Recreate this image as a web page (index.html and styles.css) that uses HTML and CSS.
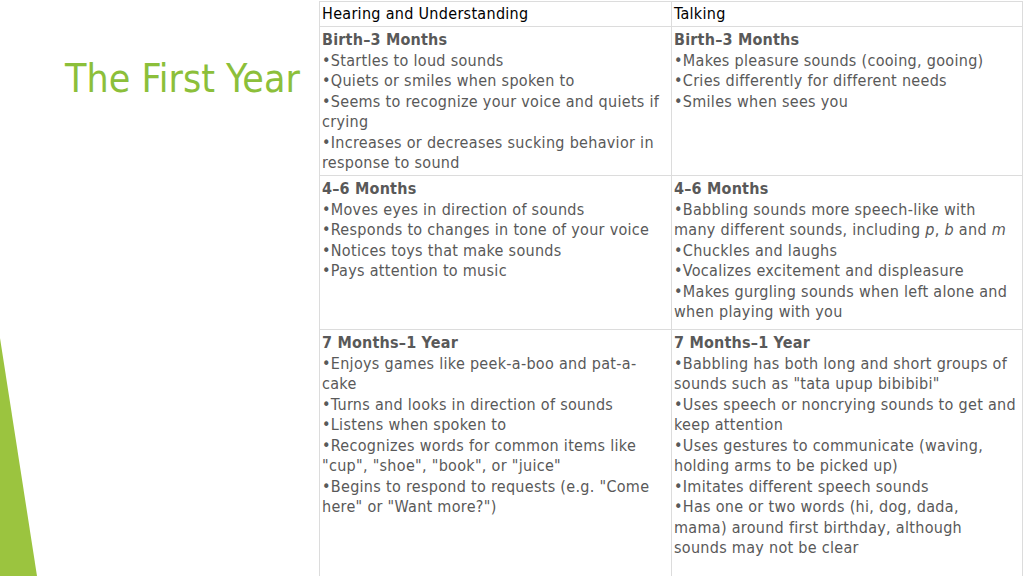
FILE: index.html
```html
<!DOCTYPE html>
<html>
<head>
<meta charset="utf-8">
<link rel="stylesheet" href="styles.css">
</head>
<body>
<div class="slide">
  <svg class="accent" width="40" height="240" viewBox="0 0 40 240"><polygon points="0,0 37,238 0,238" fill="#9bc43f"/></svg>
  <div class="side">
    <h1 class="title">The First Year</h1>
  </div>
  <div class="table">
    <div class="cell head">Hearing and Understanding</div>
    <div class="cell head">Talking</div>

    <div class="cell r1"><b>Birth–3 Months</b><br>•Startles to loud sounds<br>•Quiets or smiles when spoken to<br>•Seems to recognize your voice and quiets if<br>crying<br>•Increases or decreases sucking behavior in<br>response to sound</div>
    <div class="cell r1"><b>Birth–3 Months</b><br>•Makes pleasure sounds (cooing, gooing)<br>•Cries differently for different needs<br>•Smiles when sees you</div>

    <div class="cell r2"><b>4–6 Months</b><br>•Moves eyes in direction of sounds<br>•Responds to changes in tone of your voice<br>•Notices toys that make sounds<br>•Pays attention to music</div>
    <div class="cell r2"><b>4–6 Months</b><br>•Babbling sounds more speech-like with<br>many different sounds, including <i>p</i>, <i>b</i> and <i>m</i><br>•Chuckles and laughs<br>•Vocalizes excitement and displeasure<br>•Makes gurgling sounds when left alone and<br>when playing with you</div>

    <div class="cell r3"><b>7 Months–1 Year</b><br>•Enjoys games like peek-a-boo and pat-a-<br>cake<br>•Turns and looks in direction of sounds<br>•Listens when spoken to<br>•Recognizes words for common items like<br>"cup", "shoe", "book", or "juice"<br>•Begins to respond to requests (e.g. "Come<br>here" or "Want more?")</div>
    <div class="cell r3"><b>7 Months–1 Year</b><br>•Babbling has both long and short groups of<br>sounds such as "tata upup bibibibi"<br>•Uses speech or noncrying sounds to get and<br>keep attention<br>•Uses gestures to communicate (waving,<br>holding arms to be picked up)<br>•Imitates different speech sounds<br>•Has one or two words (hi, dog, dada,<br>mama) around first birthday, although<br>sounds may not be clear</div>
  </div>
</div>
</body>
</html>
```
FILE: styles.css
```css
html, body {
  margin: 0;
  padding: 0;
  background: #ffffff;
}
.slide {
  position: relative;
  width: 1024px;
  height: 576px;
  overflow: hidden;
  display: flex;
  align-items: flex-start;
  font-family: "DejaVu Sans", sans-serif;
  font-stretch: condensed;
}
.accent {
  position: absolute;
  left: 0;
  top: 338px;
}
.side {
  width: 319px;
  flex: none;
}
.title {
  margin: 0;
  padding: 55px 0 0 65px;
  font-weight: normal;
  font-size: 39px;
  line-height: 48px;
  color: #8cbf3a;
  white-space: nowrap;
}
.table {
  margin-top: 1px;
  display: grid;
  grid-template-columns: 352px 351px;
  grid-template-rows: 25px 149px 154px 260px;
  border-top: 1px solid #dcdcdc;
  border-left: 1px solid #dcdcdc;
}
.cell {
  border-right: 1px solid #dcdcdc;
  border-bottom: 1px solid #dcdcdc;
  padding: 3px 2px 0 2px;
  font-size: 16px;
  line-height: 20.5px;
  letter-spacing: 0.3px;
  color: #595959;
  white-space: nowrap;
}
.cell b {
  font-weight: bold;
  letter-spacing: 0.2px;
}
.head {
  color: #000000;
  padding-top: 2px;
  line-height: 20px;
}
```
